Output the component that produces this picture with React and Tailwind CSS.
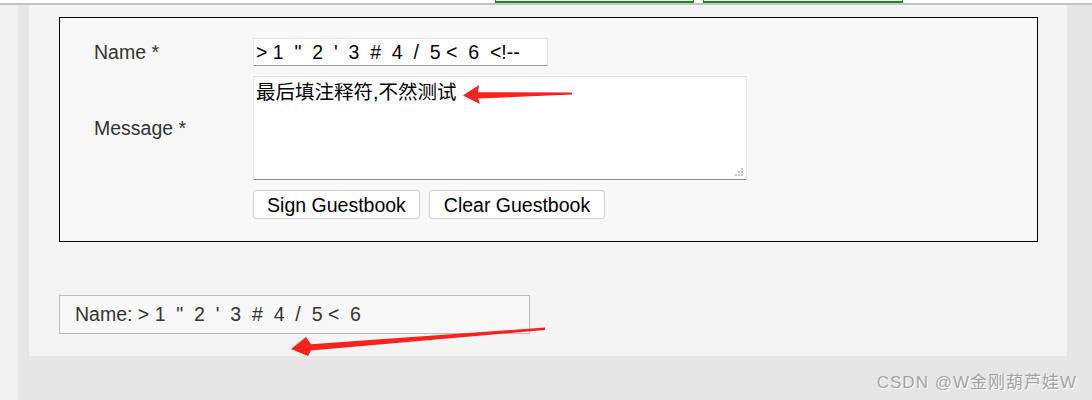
import React from "react";

const font = { fontFamily: '"Liberation Sans", Arial, "Noto Sans CJK SC", sans-serif' };

// Red annotation arrows drawn over the screenshot
function Arrows() {
  return (
    <svg
      className="pointer-events-none absolute left-0 top-0"
      width="1092"
      height="400"
      viewBox="0 0 1092 400"
    >
      <polygon
        fill="#f5231b"
        points="463,95.5 479,85 478,92.2 572,92.4 572,94.6 478,98.6 480,104"
      />
      <polygon
        fill="#f5231b"
        points="291,349 306,337 311,344.2 545,327.6 545,330 311,350.6 308,356"
      />
    </svg>
  );
}

function Grip() {
  return (
    <svg className="absolute bottom-[2px] right-[3px]" width="10" height="10" viewBox="0 0 10 10">
      <g fill="#c8c8c8">
        <rect x="7" y="0" width="2" height="2" />
        <rect x="4" y="3" width="2" height="2" />
        <rect x="7" y="3" width="2" height="2" />
        <rect x="1" y="6" width="2" height="2" />
        <rect x="4" y="6" width="2" height="2" />
        <rect x="7" y="6" width="2" height="2" />
      </g>
    </svg>
  );
}

export default function App() {
  const nameValue = '> 1  "  2  \'  3  #  4  /  5 <  6  <!--';

  return (
    <div className="relative h-[400px] w-[1092px] overflow-hidden bg-[#e6e6e6]" style={font}>
      {/* top strip with the bottoms of two buttons */}
      <div className="flex h-[3px] gap-[9px] bg-white pl-[495px]">
        <div className="h-[3px] w-[199px] border-x border-b-2 border-[#1a8a1a]" />
        <div className="h-[3px] w-[200px] border-x border-b-2 border-[#1a8a1a]" />
      </div>
      <div className="h-[2px] bg-[#c4c4c4]" />

      <div className="flex">
        <div className="h-[395px] w-[18px] bg-[#f2f2f2]" />
        <div className="flex-1 pl-[11px] pr-[25px]">
          {/* main panel */}
          <div className="h-[351px] bg-[#f4f4f4] pl-[30px] pt-[12px]">
            <div className="w-[979px] border border-black bg-[#f7f8f7] pb-[22px] pl-[34px] pt-[20px]">
              <div className="grid grid-cols-[159px_auto] gap-y-[10px] text-[19.5px] leading-[22px]">
                <div className="flex items-center text-[#333]">Name *</div>
                <div className="flex">
                  <input
                    readOnly
                    value={nameValue}
                    className="h-[28px] w-[295px] border border-[#e4e4e4] border-b-[#9a9a9a] bg-white px-[2px] text-[19.5px] whitespace-pre text-black outline-none"
                  />
                </div>

                <div className="flex items-center text-[#333]">Message *</div>
                <div className="relative flex w-[494px]">
                  <textarea
                    readOnly
                    value="最后填注释符,不然测试"
                    className="block h-[104px] w-[494px] resize-none border border-[#e4e4e4] border-b-[#8a8a8a] bg-white px-[2px] pt-[4px] text-[19.5px] leading-[22px] text-black outline-none"
                  />
                  <Grip />
                </div>

                <div />
                <div className="flex gap-[9px]">
                  <button className="h-[29px] w-[167px] rounded-[3px] border border-[#cfcfcf] bg-white text-[19.5px] text-black">
                    Sign Guestbook
                  </button>
                  <button className="h-[29px] w-[176px] rounded-[3px] border border-[#cfcfcf] bg-white text-[19.5px] text-black">
                    Clear Guestbook
                  </button>
                </div>
              </div>
            </div>

            {/* stored entry */}
            <div className="mt-[53px] flex h-[39px] w-[471px] items-center border border-[#bdbdbd] bg-[#f7f8f7] pl-[15px] text-[19.5px] text-[#333] whitespace-pre">
              {'Name: > 1  "  2  \'  3  #  4  /  5 <  6'}
            </div>
          </div>

          <div className="flex justify-end pt-[14px]">
            <span
              className="mr-[-10px] text-[17px] tracking-[1px] text-[#a3a3a3]"
              style={{ textShadow: "1px 1px 0 #fff" }}
            >
              CSDN @W金刚葫芦娃W
            </span>
          </div>
        </div>
      </div>

      <Arrows />
    </div>
  );
}
